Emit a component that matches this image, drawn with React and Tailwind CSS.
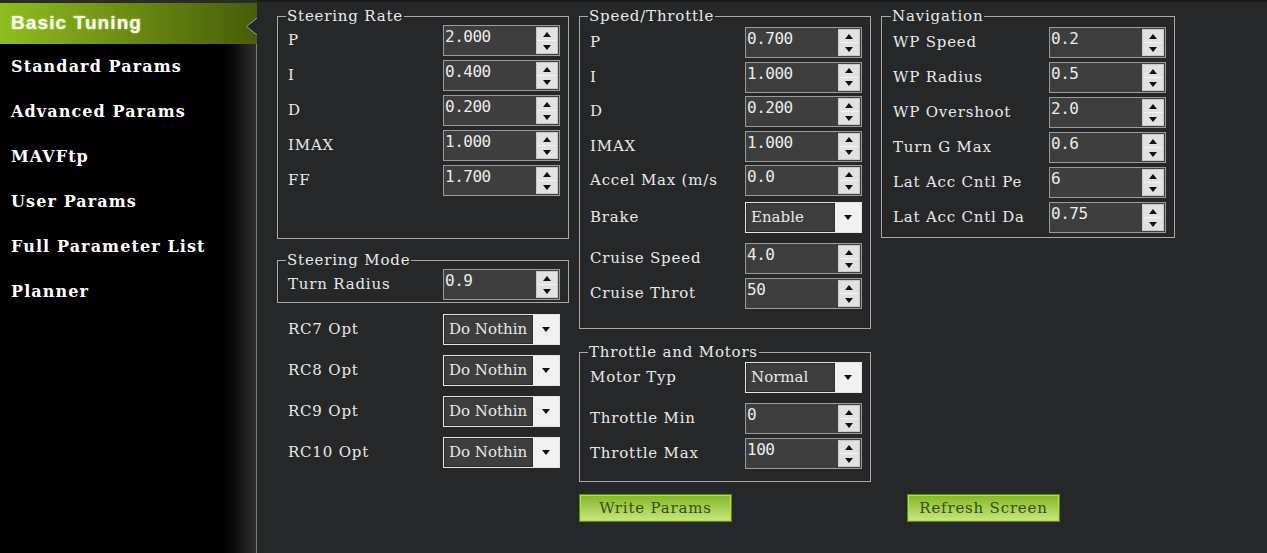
import clsx from "clsx";

const serif = "font-['DejaVu_Serif',serif]";
const digits = "font-['DejaVu_Sans_Mono',monospace]";

const menu = ["Standard Params", "Advanced Params", "MAVFtp", "User Params", "Full Parameter List", "Planner"];

function Tri({ down }) {
    return (
        <svg width="8" height="5" viewBox="0 0 8 5">
            <path d={down ? "M0 0H8L4 5Z" : "M0 5H8L4 0Z"} fill="#111" />
        </svg>
    );
}

function NumBox({ value }) {
    return (
        <div className="flex h-[31px] w-[117px] border border-[#9a9a9a] bg-[#3e3e3e]">
            <div className={clsx("flex-1 pl-[1px] pt-[2px] text-[16px] leading-[18px] tracking-[-0.5px] text-[#ececec]", digits)}>
                {value}
            </div>
            <div className="my-[1px] mr-[1px] flex w-[22px] flex-col border border-[#c8c8c8] bg-[#e2e2e2]">
                <div className="flex flex-1 items-center justify-center border-b border-[#f4f4f4]">
                    <Tri />
                </div>
                <div className="flex flex-1 items-center justify-center">
                    <Tri down />
                </div>
            </div>
        </div>
    );
}

function Drop({ value }) {
    return (
        <div className="flex h-[31px] w-[117px] border border-[#e4e4e4] bg-[#f0f0f0]">
            <div className="flex min-w-0 flex-1 items-center border border-[#2c2c2c] bg-[#3d3d3d] pl-[4px] pb-[1px] tracking-[0px] whitespace-nowrap">
                {value}
            </div>
            <div className="flex w-[26px] items-center justify-center">
                <Tri down />
            </div>
        </div>
    );
}

function Row({ label, children, className }) {
    return (
        <div className={clsx("flex items-center justify-between", className)}>
            <span className="whitespace-pre">{label}</span>
            {children}
        </div>
    );
}

function Group({ title, className, children }) {
    return (
        <fieldset className={clsx("border border-[#a9a9a9] pr-[8px]", className)}>
            <legend className="-ml-[2px] px-[1px] leading-[18px]">{title}</legend>
            {children}
        </fieldset>
    );
}

function Button({ children, className }) {
    return (
        <button
            className={clsx(
                "h-[28px] w-[153px] border border-[#5d8a12] bg-linear-to-b from-[#84b71d] to-[#c8e77f] text-[#34500c] shadow-[inset_0_0_0_1px_#b5db5a]",
                className
            )}
        >
            {children}
        </button>
    );
}

export default function App() {
    return (
        <div className={clsx("flex h-[553px] w-[1267px] overflow-hidden text-[15px] tracking-[0.8px] text-[#e9e9e9]", serif)}>
            <div className="flex w-[257px] shrink-0 flex-col border-r border-[#7c7c7c] bg-[linear-gradient(to_right,#000_0,#000_226px,#2f2f2f_256px)]">
                <div className="h-[3px] bg-[#2a2a2a] -mr-px" />
                <div className="relative -mr-px flex h-[41px] items-center bg-linear-to-r from-[#8fbe1f] to-[#485d08] pl-[11px] font-['Liberation_Sans',sans-serif] text-[19px] font-bold tracking-[1.1px] text-[#fbfff0] [text-shadow:0_0_2px_#d9f29a]">
                    Basic Tuning
                    <svg className="absolute right-0 top-[15px]" width="11" height="17" viewBox="0 0 11 17">
                        <path d="M11 0L0.5 8.5L11 17Z" fill="#262729" />
                        <path d="M11 0L0.5 8.5L11 17" fill="none" stroke="#a0a0a0" strokeWidth="1" />
                    </svg>
                </div>
                {menu.map(m => (
                    <div key={m} className="flex h-[45px] items-center pl-[11px] text-[16px] font-bold tracking-[1.1px] text-white">
                        {m}
                    </div>
                ))}
            </div>

            <div className="flex-1 border-t-2 border-[#1c1c1c] bg-[#262729] pl-[20px] pt-[5px]">
                <div className="grid grid-cols-[292px_292px_294px] gap-x-[10px]">
                    <div className="row-span-2 flex flex-col">
                        <Group title="Steering Rate" className="pl-[10px] pb-[42px]">
                            <div className="flex flex-col gap-[4px]">
                                <Row label="P"><NumBox value="2.000" /></Row>
                                <Row label="I"><NumBox value="0.400" /></Row>
                                <Row label="D"><NumBox value="0.200" /></Row>
                                <Row label="IMAX"><NumBox value="1.000" /></Row>
                                <Row label="FF"><NumBox value="1.700" /></Row>
                            </div>
                        </Group>
                        <Group title="Steering Mode" className="mt-[12px] pl-[10px] pb-[2px]">
                            <Row label="Turn Radius"><NumBox value="0.9" /></Row>
                        </Group>
                        <div className="mt-[11px] flex flex-col gap-[10px] pl-[11px] pr-[9px]">
                            <Row label="RC7 Opt"><Drop value="Do Nothin" /></Row>
                            <Row label="RC8 Opt"><Drop value="Do Nothin" /></Row>
                            <Row label="RC9 Opt"><Drop value="Do Nothin" /></Row>
                            <Row label="RC10 Opt"><Drop value="Do Nothin" /></Row>
                        </div>
                    </div>

                    <div className="flex flex-col">
                        <Group title="Speed/Throttle" className="pl-[10px] pb-[19px]">
                            <div className="flex flex-col pt-[2px]">
                                <Row label="P"><NumBox value="0.700" /></Row>
                                <Row label="I" className="mt-[3.5px]"><NumBox value="1.000" /></Row>
                                <Row label="D" className="mt-[3.5px]"><NumBox value="0.200" /></Row>
                                <Row label="IMAX" className="mt-[3.5px]"><NumBox value="1.000" /></Row>
                                <Row label="Accel Max (m/s" className="mt-[3.5px]"><NumBox value="0.0" /></Row>
                                <Row label="Brake" className="mt-[6px]"><Drop value="Enable" /></Row>
                                <Row label="Cruise Speed" className="mt-[10px]"><NumBox value="4.0" /></Row>
                                <Row label="Cruise Throt" className="mt-[4px]"><NumBox value="50" /></Row>
                            </div>
                        </Group>
                        <Group title="Throttle and Motors" className="mt-[14px] pl-[10px] pb-[12px]">
                            <div className="flex flex-col pt-[1px]">
                                <Row label="Motor Typ"><Drop value="Normal" /></Row>
                                <Row label="Throttle Min" className="mt-[10px]"><NumBox value="0" /></Row>
                                <Row label="Throttle Max" className="mt-[4px]"><NumBox value="100" /></Row>
                            </div>
                        </Group>
                    </div>

                    <div className="flex flex-col">
                        <Group title="Navigation" className="pl-[11px] pb-[4px]">
                            <div className="flex flex-col gap-[4px] pt-[2px]">
                                <Row label="WP Speed"><NumBox value="0.2" /></Row>
                                <Row label="WP Radius"><NumBox value="0.5" /></Row>
                                <Row label="WP Overshoot"><NumBox value="2.0" /></Row>
                                <Row label="Turn G Max"><NumBox value="0.6" /></Row>
                                <Row label="Lat Acc Cntl Pe"><NumBox value="6" /></Row>
                                <Row label="Lat Acc Cntl Da"><NumBox value="0.75" /></Row>
                            </div>
                        </Group>
                    </div>

                    <div className="mt-[12px]">
                        <Button>Write Params</Button>
                    </div>
                    <div className="mt-[12px] pl-[26px]">
                        <Button>Refresh Screen</Button>
                    </div>
                </div>
            </div>
        </div>
    );
}
